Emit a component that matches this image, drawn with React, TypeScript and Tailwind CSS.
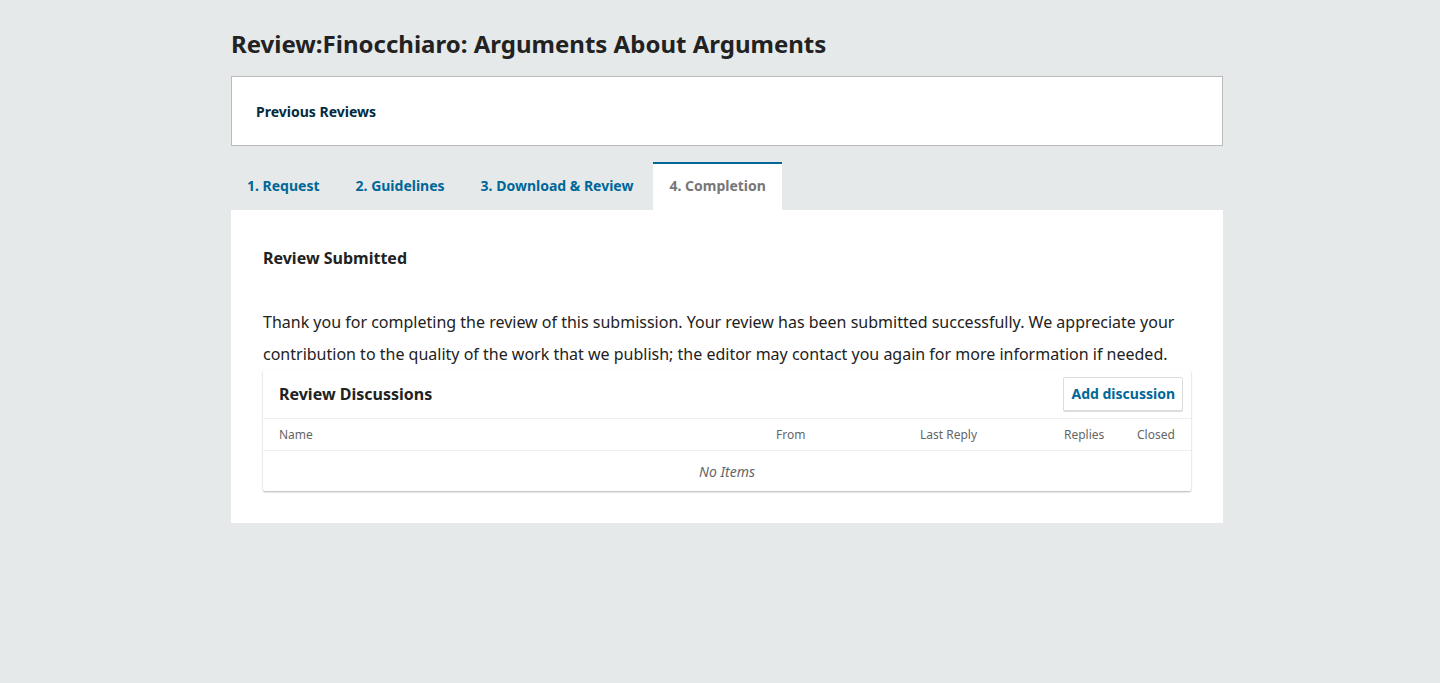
import React from 'react'

const tabs = ['1. Request', '2. Guidelines', '3. Download & Review', '4. Completion']

const columns = [
  { label: 'Name', width: 'w-[497px]' },
  { label: 'From', width: 'w-[144px]' },
  { label: 'Last Reply', width: 'w-[144px]' },
  { label: 'Replies', width: 'w-[73px]' },
  { label: 'Closed', width: 'w-[70px]' },
]

export default function App() {
  const active = 3

  return (
    <div className="min-h-[683px] w-full bg-[#e5e9ea] font-['Noto_Sans',sans-serif] text-[#222]">
      <div className="ml-[231px] w-[992px] pt-[27px]">
        {/* Page title */}
        <h1 className="text-[24px] font-bold leading-[34px] text-[#222]">
          Review:Finocchiaro: Arguments About Arguments
        </h1>

        {/* Previous reviews box */}
        <div className="mt-[15px] flex h-[70px] items-center border border-[#bbb] bg-white px-6">
          <span className="text-[14px] font-bold text-[#002c40]">Previous Reviews</span>
        </div>

        {/* Tabs */}
        <div className="mt-4 flex gap-1">
          {tabs.map((tab, i) => (
            <div
              key={tab}
              className={
                i === active
                  ? 'flex h-12 items-center border-t-2 border-[#006798] bg-white px-4 pb-1 text-[14px] font-bold text-[#777]'
                  : 'flex h-12 items-center border-t-2 border-transparent px-4 pb-1 text-[14px] font-bold text-[#006798]'
              }
            >
              {tab}
            </div>
          ))}
        </div>

        {/* Tab panel */}
        <div className="bg-white px-8 pb-8 pt-[36px]">
          <h2 className="text-[16px] font-bold leading-6">Review Submitted</h2>
          <p className="mt-[36px] text-[16px] leading-[32px] text-[#222]">
            Thank you for completing the review of this submission. Your review has been submitted successfully. We
            appreciate your contribution to the quality of the work that we publish; the editor may contact you again
            for more information if needed.
          </p>

          {/* Review discussions grid */}
          <div className="rounded-[2px] bg-white shadow-[0_1px_2px_rgba(0,0,0,0.3)]">
            <div className="flex h-[49px] items-center justify-between border-b border-[#eee] pl-4 pr-2">
              <span className="text-[16px] font-bold">Review Discussions</span>
              <button className="h-[34px] rounded-[2px] border border-[#ddd] bg-white px-[7px] pb-px text-[14px] font-bold text-[#006798] shadow-[0_1px_0_#ddd]">
                Add discussion
              </button>
            </div>
            <div className="flex h-[32px] items-center border-b border-[#eee]">
              {columns.map(col => (
                <div key={col.label} className={`${col.width} pl-4 text-[12px] text-[#666]`}>
                  {col.label}
                </div>
              ))}
            </div>
            <div className="flex h-[40px] items-center justify-center text-[14px] italic text-[#666]">No Items</div>
          </div>
        </div>
      </div>
    </div>
  )
}
